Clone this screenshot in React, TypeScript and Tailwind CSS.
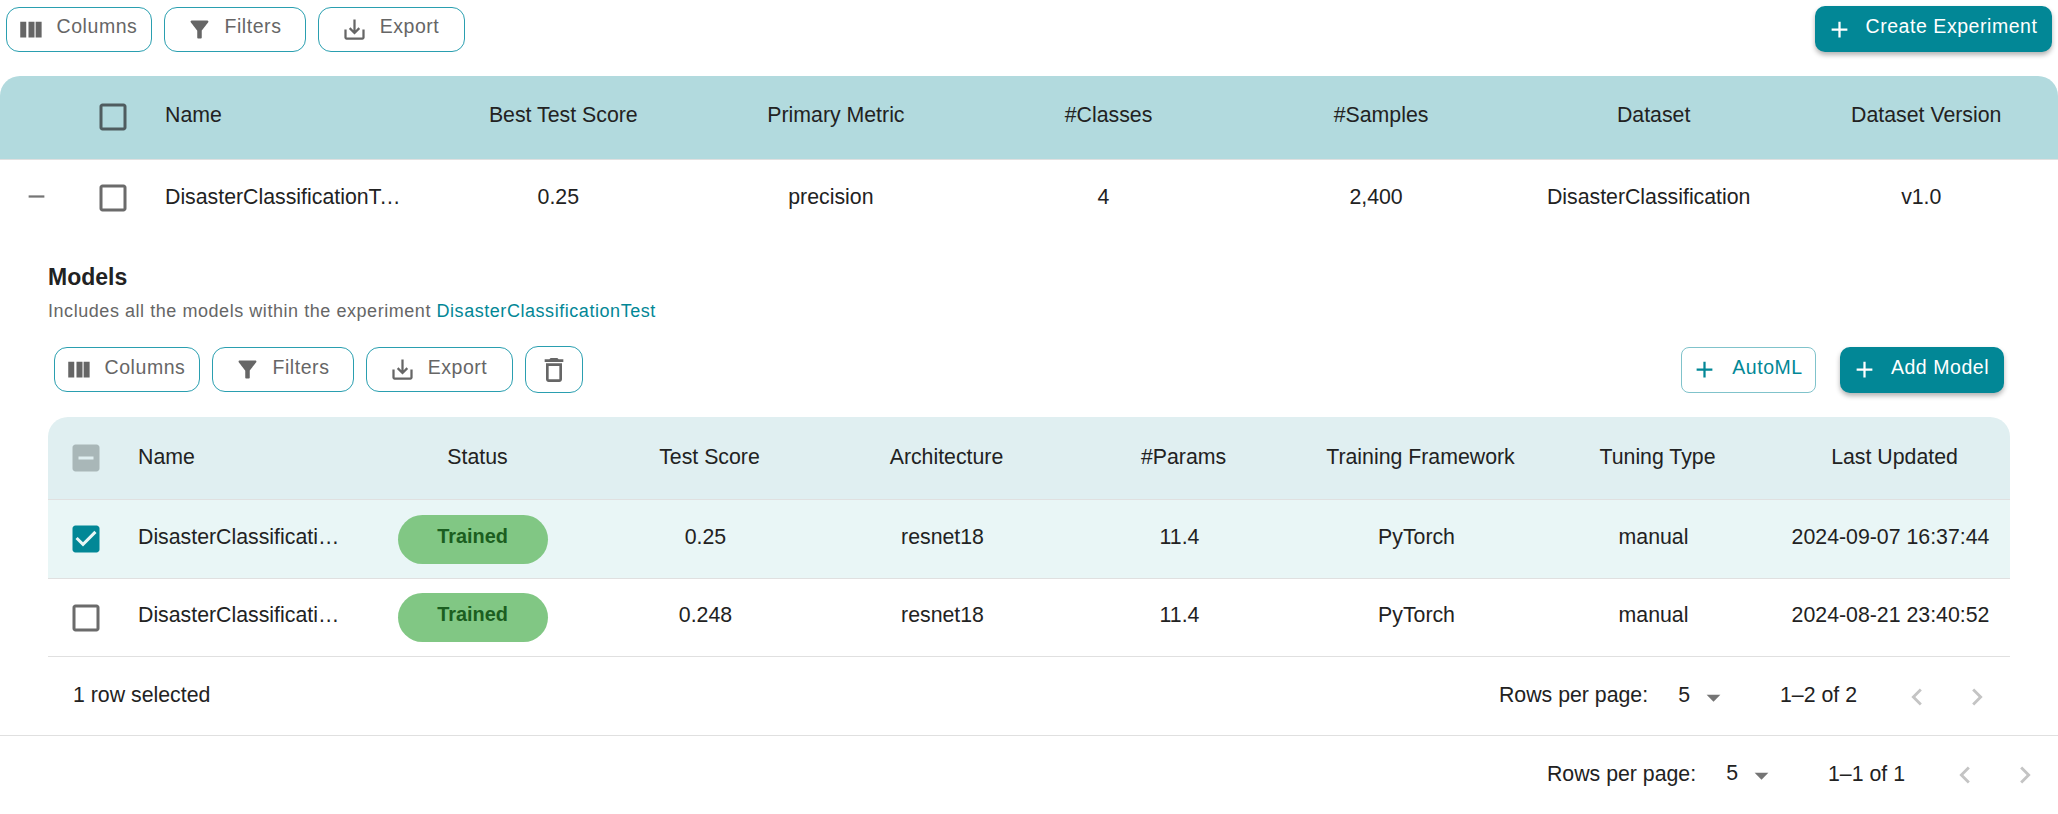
import React from "react";

const P = {
  box: "M19 5v14H5V5h14m0-2H5c-1.1 0-2 .9-2 2v14c0 1.1.9 2 2 2h14c1.1 0 2-.9 2-2V5c0-1.1-.9-2-2-2z",
  checked: "M19 3H5c-1.11 0-2 .9-2 2v14c0 1.1.89 2 2 2h14c1.11 0 2-.9 2-2V5c0-1.1-.89-2-2-2zm-9 14l-5-5 1.41-1.41L10 14.17l7.59-7.59L19 8l-9 9z",
  ind: "M19 3H5c-1.1 0-2 .9-2 2v14c0 1.1.9 2 2 2h14c1.1 0 2-.9 2-2V5c0-1.1-.9-2-2-2zm-2 10H7v-2h10v2z",
  columns: "M14.67 5v14H9.33V5h5.34zm1 14H21V5h-5.33v14zm-8.34 0V5H2v14h5.33z",
  filter: "M4.25 5.61C6.27 8.2 10 13 10 13v6c0 .55.45 1 1 1h2c.55 0 1-.45 1-1v-6s3.72-4.8 5.74-7.39c.51-.66.04-1.61-.79-1.61H5.04c-.83 0-1.3.95-.79 1.61z",
  export: "M19 12v7H5v-7H3v7c0 1.1.9 2 2 2h14c1.1 0 2-.9 2-2v-7h-2zm-6 .67l2.59-2.58L17 11.5l-5 5-5-5 1.41-1.41L11 12.67V3h2z",
  del: "M6 19c0 1.1.9 2 2 2h8c1.1 0 2-.9 2-2V7H6v12zM8 9h8v10H8V9zm7.5-5l-1-1h-5l-1 1H5v2h14V4z",
  add: "M19 13h-6v6h-2v-6H5v-2h6V5h2v6h6v2z",
  minus: "M19 13H5v-2h14v2z",
  left: "M15.41 16.59 10.83 12l4.58-4.59L14 6l-6 6 6 6 1.41-1.41z",
  right: "M8.59 16.59 13.17 12 8.59 7.41 10 6l6 6-6 6-1.41-1.41z",
  drop: "M7 10l5 5 5-5z",
};

function Icon({ d, className }: { d: string; className: string }) {
  return (
    <svg viewBox="0 0 24 24" className={className} fill="currentColor">
      <path d={d} />
    </svg>
  );
}

function ToolBtn({ d, label, w }: { d: string; label: string; w: string }) {
  return (
    <div className={`${w} h-[45px] flex items-center justify-center gap-[12px] pr-[3px] rounded-[13px] border border-[#2a9fb0] text-[#666] text-[19.5px] tracking-[0.55px]`}>
      <Icon d={d} className="w-[27px] h-[27px] shrink-0" />
      <span className="-mt-[4px]">{label}</span>
    </div>
  );
}

function Tools() {
  return (
    <>
      <ToolBtn d={P.columns} label="Columns" w="w-[146px]" />
      <ToolBtn d={P.filter} label="Filters" w="w-[142px]" />
      <ToolBtn d={P.export} label="Export" w="w-[147px]" />
    </>
  );
}

function Solid({ label, w }: { label: string; w: string }) {
  return (
    <div className={`${w} h-[46px] flex items-center justify-center gap-[13px] pr-[4px] rounded-[10px] bg-[#028796] text-white text-[19.5px] tracking-[0.55px] shadow-[0_3px_5px_rgba(0,0,0,0.3)]`}>
      <Icon d={P.add} className="w-[27px] h-[27px] shrink-0" />
      <span className="-mt-[4px]">{label}</span>
    </div>
  );
}

function Pager({ range }: { range: string }) {
  return (
    <div className="flex items-center justify-end pr-[16px] text-[21.3px] text-[#222]">
      <span>Rows per page:</span>
      <span className="ml-[30px] -mt-[1px]">5</span>
      <Icon d={P.drop} className="ml-[7px] w-[33px] h-[33px] text-[#757575] mt-[2px]" />
      <span className="ml-[50px] w-[78px] whitespace-nowrap">{range}</span>
      <Icon d={P.left} className="ml-[42px] w-[34px] h-[34px] text-[#c4c4c4] mt-[1px]" />
      <Icon d={P.right} className="ml-[26px] w-[34px] h-[34px] text-[#c4c4c4] mt-[1px]" />
    </div>
  );
}

const outerHead = ["Best Test Score", "Primary Metric", "#Classes", "#Samples", "Dataset", "Dataset Version"];
const outerRow = ["0.25", "precision", "4", "2,400", "DisasterClassification", "v1.0"];
const innerHead = ["Test Score", "Architecture", "#Params", "Training Framework", "Tuning Type", "Last Updated"];

function Cells({ items, w, shift }: { items: string[]; w: string; shift: string }) {
  return (
    <>
      {items.map((t) => (
        <div key={t} className={`${w} shrink-0 text-center whitespace-nowrap ${shift}`}>
          {t}
        </div>
      ))}
    </>
  );
}

function ModelRow({ sel, score, date }: { sel: boolean; score: string; date: string }) {
  return (
    <div className={`flex items-center ${sel ? "h-[79px] bg-[#e9f6f6]" : "h-[78px]"} border-b border-[#e0e0e0] text-[21.3px] text-[#222]`}>
      <div className="w-[90px] shrink-0 pl-[20px] flex">
        {sel ? <Icon d={P.checked} className="w-[36px] h-[36px] text-[#028796]" /> : <Icon d={P.box} className="w-[36px] h-[36px] text-[#6b6b6b]" />}
      </div>
      <div className={`w-[239px] shrink-0 whitespace-nowrap ${sel ? "-mt-[2px]" : "-mt-[3px]"}`}>DisasterClassificati…</div>
      <div className="w-[237px] shrink-0 flex justify-center pr-[10px] -ml-[18px]">
        <div className="w-[150px] h-[49px] rounded-full bg-[#81c784] flex items-center justify-center text-[#1b5e20] font-bold text-[19.9px] pb-[5px]">Trained</div>
      </div>
      <div className={`flex -ml-[4px] ${sel ? "-mt-[2px]" : "-mt-[3px]"}`}>
        <Cells items={[score, "resnet18", "11.4", "PyTorch", "manual", date]} w="w-[237px]" shift="pr-[10px]" />
      </div>
    </div>
  );
}

export default function App() {
  return (
    <div className="w-[2058px] h-[814px] overflow-hidden bg-white font-['Liberation_Sans',Arial,sans-serif] text-[#222]">
      <div className="flex items-center gap-[12px] pl-[6px] pr-[6px] pt-[6px]">
        <Tools />
        <div className="ml-auto">
          <Solid label="Create Experiment" w="w-[237px]" />
        </div>
      </div>

      <div className="mt-[24px] h-[84px] bg-[#b2dade] rounded-t-[20px] flex items-center text-[21.3px] -mb-px">
        <div className="w-[95px] shrink-0" />
        <div className="w-[70px] shrink-0 flex -mt-[3px]">
          <Icon d={P.box} className="w-[36px] h-[36px] text-[#4f5c5f]" />
        </div>
        <div className="w-[262px] shrink-0 -mt-[5px]">Name</div>
        <div className="flex -mt-[5px]">
          <Cells items={outerHead} w="w-[272.6px]" shift="" />
        </div>
      </div>

      <div className="h-[73px] flex items-center border-t border-[#e0e0e0] text-[21.3px]">
        <div className="w-[95px] shrink-0 pl-[23px] flex mt-[1px]">
          <Icon d={P.minus} className="w-[27px] h-[27px] text-[#757575]" />
        </div>
        <div className="w-[70px] shrink-0 flex mt-[4px]">
          <Icon d={P.box} className="w-[36px] h-[36px] text-[#6b6b6b]" />
        </div>
        <div className="w-[262px] shrink-0 truncate pr-[26px] mt-[3px]">DisasterClassificationTest</div>
        <div className="flex mt-[3px]">
          <Cells items={outerRow} w="w-[272.6px]" shift="pr-[10px]" />
        </div>
      </div>

      <div className="pl-[48px] pr-[48px]">
        <div className="mt-[31px] text-[23px] font-bold leading-[28px] text-[#222]">Models</div>
        <div className="mt-[10px] text-[18px] tracking-[0.55px] leading-[20px] text-[#666]">
          Includes all the models within the experiment <span className="text-[#028796]">DisasterClassificationTest</span>
        </div>

        <div className="mt-[25px] flex items-center gap-[12px] pl-[6px] pr-[6px]">
          <Tools />
          <div className="w-[58px] h-[47px] flex items-center justify-center rounded-[13px] border border-[#2a9fb0] text-[#666]">
            <Icon d={P.del} className="w-[32px] h-[32px]" />
          </div>
          <div className="ml-auto w-[135px] h-[46px] flex items-center justify-center gap-[14px] pr-[3px] rounded-[8px] border border-[#80c3cb] text-[#028796] text-[19.5px] tracking-[0.55px]">
            <Icon d={P.add} className="w-[27px] h-[27px]" />
            <span className="-mt-[4px]">AutoML</span>
          </div>
          <div className="ml-[12px]">
            <Solid label="Add Model" w="w-[164px]" />
          </div>
        </div>

        <div className="mt-[24px] h-[83px] bg-[#e0eff1] rounded-t-[20px] flex items-center text-[21.3px] border-b border-[#e0e0e0]">
          <div className="w-[90px] shrink-0 pl-[20px] flex">
            <Icon d={P.ind} className="w-[36px] h-[36px] text-[#a9b7b8]" />
          </div>
          <div className="w-[239px] shrink-0">Name</div>
          <div className="w-[237px] shrink-0 text-center -ml-[18px]">Status</div>
          <div className="flex -ml-[5px]">
            <Cells items={innerHead} w="w-[237px]" shift="" />
          </div>
        </div>
        <ModelRow sel score="0.25" date="2024-09-07 16:37:44" />
        <ModelRow sel={false} score="0.248" date="2024-08-21 23:40:52" />

        <div className="h-[78px] flex items-center justify-between pl-[25px]">
          <span className="text-[21.3px]">1 row selected</span>
          <Pager range="1–2 of 2" />
        </div>
      </div>

      <div className="border-t border-[#e0e0e0] h-[78px] flex items-center justify-end">
        <Pager range="1–1 of 1" />
      </div>
    </div>
  );
}
